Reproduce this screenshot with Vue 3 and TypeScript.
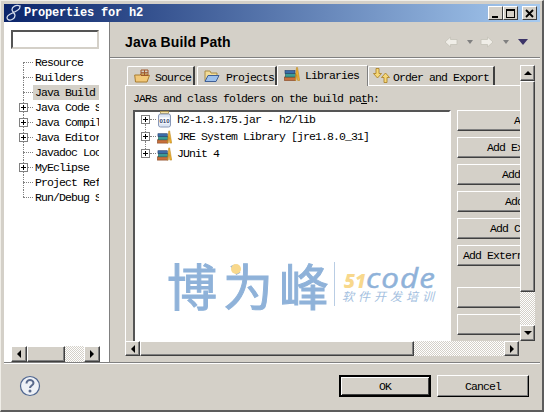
<script setup lang="ts">
interface TreeNode {
  label: string
  expandable: boolean
  selected?: boolean
}

const pages: TreeNode[] = [
  { label: 'Resource', expandable: false },
  { label: 'Builders', expandable: false },
  { label: 'Java Build', expandable: false, selected: true },
  { label: 'Java Code S', expandable: true },
  { label: 'Java Compil', expandable: true },
  { label: 'Java Editor', expandable: true },
  { label: 'Javadoc Loc', expandable: false },
  { label: 'MyEclipse', expandable: true },
  { label: 'Project Ref', expandable: false },
  { label: 'Run/Debug S', expandable: false },
]

const entries = [
  { label: 'h2-1.3.175.jar - h2/lib', kind: 'jar' },
  { label: 'JRE System Library [jre1.8.0_31]', kind: 'lib' },
  { label: 'JUnit 4', kind: 'lib' },
]

const actions = [
  'Add JARs...',
  'Add External JARs...',
  'Add Variable...',
  'Add Library...',
  'Add Class Folder...',
  'Add External Class Folder...',
]
const spare = ['Edit...', 'Remove']
</script>

<template>
  <div class="window">
    <header class="titlebar">
      <svg class="app-icon" width="16" height="18" viewBox="0 0 16 18">
        <path d="M14 2C10 .5 6 2.500 6 5.500c0 2.500 3 3.500 3 6 0 3-3.500 5-6 4.500S0 12.500 3.500 10.500 12 7 13.500 4.500C14.200 3.300 13.500 2.500 14 2Z" fill="none" stroke="#d4dcec" stroke-width="1.300" />
      </svg>
      <span class="title">Properties for h2</span>
      <div class="win-buttons">
        <button class="win-btn"><i class="min-bar"></i></button>
        <button class="win-btn"><i class="max-box"></i></button>
        <button class="win-btn close">
          <svg width="9" height="9" viewBox="0 0 9 9"><path d="M1 1l7 7M8 1L1 8" stroke="#000" stroke-width="1.800" /></svg>
        </button>
      </div>
    </header>

    <div class="main">
      <aside class="sidebar">
        <input class="filter" />
        <ul class="page-tree">
          <li v-for="page in pages" :key="page.label" class="page-row">
            <span class="twist">
              <span class="guide"></span>
              <span v-if="page.expandable" class="plus"></span>
            </span>
            <span class="page-label" :class="{ selected: page.selected }">{{ page.label }}</span>
          </li>
        </ul>
        <div class="side-hscroll">
          <button class="sb-btn"><i class="arrow left"></i></button>
          <div class="sb-thumb side-thumb"></div>
          <div class="sb-track"></div>
          <button class="sb-btn"><i class="arrow right"></i></button>
        </div>
      </aside>

      <section class="page">
        <div class="page-head">
          <h1>Java Build Path</h1>
          <div class="nav-tools">
            <svg width="14" height="12" viewBox="0 0 14 12"><path d="M6.500 1 1 6l5.500 5V8.500H13v-5H6.500Z" fill="#f0eee8" stroke="#c4c1b8" stroke-width="0.800" /></svg>
            <i class="mini-drop"></i>
            <svg class="fwd" width="14" height="12" viewBox="0 0 14 12"><path d="M7.500 1 13 6l-5.500 5V8.500H1v-5h6.500Z" fill="#f0eee8" stroke="#c4c1b8" stroke-width="0.800" /></svg>
            <i class="mini-drop"></i>
            <i class="menu-drop"></i>
          </div>
        </div>

        <div class="page-body">
          <div class="scroller">
            <div class="viewport">
              <div class="tabs">
                <div class="tab first">
                  <svg width="16" height="14" viewBox="0 0 16 14">
                    <path d="M1.500 13 .7 6H6l1-1h6l.5 1.500 2-.2L13 13Z" fill="#f2c878" stroke="#a87c30" />
                    <path d="M7 1h7v5.500H7ZM10.500 1v5.500M7 3.700h7" fill="none" stroke="#a0582c" />
                  </svg>
                  <span>Source</span>
                </div>
                <div class="tab second">
                  <svg width="16" height="14" viewBox="0 0 16 14">
                    <path d="M1 12V2h5l1 2h6v3" fill="#f2dc98" stroke="#a88c48" />
                    <path d="M1 12.500 4 6.500h11l-3 6Z" fill="#9cc0ec" stroke="#3f5f96" />
                  </svg>
                  <span>Projects</span>
                </div>
                <div class="tab active">
                  <svg width="16" height="14" viewBox="0 0 16 14">
                    <rect x="0.500" y="10" width="11" height="3.500" fill="#c8703c" stroke="#80401c" stroke-width="0.600" />
                    <rect x="1.500" y="6.500" width="10" height="3.500" fill="#3c9c94" stroke="#205c58" stroke-width="0.600" />
                    <rect x="1" y="3.500" width="10" height="3" fill="#3c6ca8" stroke="#203c68" stroke-width="0.600" />
                    <path d="M11 13.500 12.500.5h1l2.200 13h-2l-1-6-.700 6Z" fill="#eeb030" stroke="#b07c18" stroke-width="0.500" />
                  </svg>
                  <span>Libraries</span>
                </div>
                <div class="tab last">
                  <svg width="17" height="15" viewBox="0 0 17 15">
                    <path d="M3 .5h3v5h2.500L4.500 10 .5 5.500H3Z" fill="#f6d878" stroke="#a87c20" stroke-width="0.800" />
                    <path d="M11 14.500v-5H8.500L12.500 5l4 4.500H14v5Z" fill="#f6d878" stroke="#a87c20" stroke-width="0.800" />
                  </svg>
                  <span>Order and Export</span>
                </div>
              </div>

              <div class="folder">
                <p class="caption">JARs and class folders on the build pa<u>t</u>h:</p>
                <div class="lib-row">
                  <div class="lib-tree">
                    <div v-for="(entry, i) in entries" :key="entry.label" class="lib-entry">
                      <span class="lib-twist" :class="{ 'has-next': i < entries.length - 1 }"><span class="plus"></span></span>
                      <svg v-if="entry.kind === 'jar'" class="lib-icon" width="15" height="17" viewBox="0 0 15 17">
                        <rect x="3.500" y="0.500" width="8" height="2" fill="#f8e4a8" stroke="#a89048" stroke-width="0.800" />
                        <rect x="1.500" y="3" width="12" height="13" rx="2" fill="#dde6f4" stroke="#8898b8" />
                        <rect x="2.500" y="6.500" width="10" height="6" fill="#fff" />
                        <text class="jar-bits" x="7.500" y="11.500" text-anchor="middle">010</text>
                      </svg>
                      <svg v-else class="lib-icon" width="15" height="14" viewBox="0 0 16 14">
                        <rect x="0.500" y="10" width="11" height="3.500" fill="#c8703c" stroke="#80401c" stroke-width="0.600" />
                        <rect x="1.500" y="6.500" width="10" height="3.500" fill="#3c9c94" stroke="#205c58" stroke-width="0.600" />
                        <rect x="1" y="3.500" width="10" height="3" fill="#3c6ca8" stroke="#203c68" stroke-width="0.600" />
                        <path d="M11 13.500 12.500.5h1l2.200 13h-2l-1-6-.700 6Z" fill="#eeb030" stroke="#b07c18" stroke-width="0.500" />
                      </svg>
                      <span class="lib-label">{{ entry.label }}</span>
                    </div>
                  </div>
                  <div class="actions">
                    <button v-for="a in actions" :key="a" class="push">{{ a }}</button>
                    <div class="action-gap"></div>
                    <button v-for="a in spare" :key="a" class="push">{{ a }}</button>
                  </div>
                </div>
              </div>
            </div>

            <div class="vscroll">
              <button class="sb-btn"><i class="arrow up"></i></button>
              <div class="sb-thumb v-thumb"></div>
              <div class="sb-track"></div>
              <button class="sb-btn"><i class="arrow down"></i></button>
            </div>

            <div class="hscroll">
              <button class="sb-btn"><i class="arrow left"></i></button>
              <div class="sb-thumb h-thumb"></div>
              <div class="sb-track"></div>
              <button class="sb-btn"><i class="arrow right"></i></button>
            </div>
          </div>
        </div>
      </section>
    </div>

    <footer class="footer">
      <svg class="help" width="22" height="22" viewBox="0 0 22 22">
        <circle cx="11" cy="11" r="9.500" fill="#eef1f6" stroke="#4f6690" stroke-width="1.200" />
        <path d="M7.500 8.500C7.500 6 9.500 5 11 5s3.500 1 3.500 3c0 2.500-3.500 2.500-3.500 5" fill="none" stroke="#5a6a8c" stroke-width="2" />
        <circle cx="11" cy="16" r="1.500" fill="#5a6a8c" />
      </svg>
      <div class="footer-btns">
        <button class="push default">OK</button>
        <button class="push cancel">Cancel</button>
      </div>
    </footer>

    <!-- watermark stamped over the screenshot -->
    <div class="watermark">
      <i class="wm-dot"></i>
      <span class="wm-name">博为峰</span>
      <i class="wm-rule"></i>
      <div class="wm-brand">
        <div class="wm-logo"><span class="wm-51">51</span><span class="wm-code">code</span></div>
        <div class="wm-sub">软件开发培训</div>
      </div>
    </div>
  </div>
</template>

<style scoped>
.window {
  position: relative;
  width: 544px;
  height: 412px;
  box-sizing: border-box;
  padding: 3px 2px 1px 3px;
  display: flex;
  flex-direction: column;
  background: #d4d0c8;
  border-top: 1px solid #f0eee8;
  border-left: 1px solid #f0eee8;
  border-right: 2px solid #5c5c5c;
  border-bottom: 2px solid #5c5c5c;
  overflow: hidden;
  font-family: "Liberation Mono", monospace;
  font-size: 11.500px;
  letter-spacing: -0.900px;
  color: #000;
}

.titlebar {
  height: 18px;
  flex: none;
  display: flex;
  align-items: center;
  background: linear-gradient(to right, #0a246a, #a6caf0);
}
.app-icon { margin-left: 2px; flex: none; }
.title {
  margin-left: 2px;
  color: #fff;
  font-weight: bold;
  font-size: 12px;
  letter-spacing: -0.200px;
}
.win-buttons { margin-left: auto; margin-right: 3px; display: flex; }
.win-btn {
  width: 15px;
  height: 14px;
  padding: 0;
  display: flex;
  align-items: center;
  justify-content: center;
  background: #d4d0c8;
  border: 1px solid;
  border-color: #fff #404040 #404040 #fff;
}
.win-btn.close { margin-left: 4px; }
.min-bar { width: 6px; height: 2px; background: #000; margin-top: 7px; margin-right: 2px; }
.max-box { width: 9px; height: 9px; box-sizing: border-box; border: 1px solid #000; border-top-width: 2px; }

.main { flex: none; height: 340px; display: flex; }

.sidebar {
  width: 106px;
  flex: none;
  box-sizing: border-box;
  background: #fff;
  border-right: 1px solid #808080;
  padding: 8px 10px 0 7px;
  display: flex;
  flex-direction: column;
}
.filter {
  width: 88px;
  height: 19px;
  box-sizing: border-box;
  flex: none;
  padding: 0;
  background: #fff;
  border: 2px solid;
  border-color: #555 #d4d0c8 #d4d0c8 #555;
  outline: none;
}
.page-tree { list-style: none; margin: 6px 0 0; padding: 0; flex: 1; }
.page-row { height: 15px; display: flex; align-items: center; }
.twist { position: relative; width: 22px; height: 15px; flex: none; }
.twist::before {
  content: "";
  position: absolute;
  left: 12px;
  top: 0;
  height: 15px;
  border-left: 1px dotted #808080;
}
.page-row:first-child .twist::before { top: 7px; height: 8px; }
.page-row:last-child .twist::before { height: 7px; }
.guide {
  position: absolute;
  left: 12px;
  top: 7px;
  width: 10px;
  border-top: 1px dotted #808080;
}
.plus {
  position: absolute;
  left: 8px;
  top: 3px;
  width: 9px;
  height: 9px;
  box-sizing: border-box;
  background:
    linear-gradient(#000, #000) center / 5px 1px no-repeat,
    linear-gradient(#000, #000) center / 1px 5px no-repeat,
    #fff;
  border: 1px solid #808080;
}
.page-label {
  display: block;
  padding: 0 0 0 2px;
  width: 67px;
  height: 15px;
  box-sizing: border-box;
  white-space: nowrap;
  overflow: hidden;
  line-height: 15px;
}
.page-label.selected { background: #d4d0c8; }

.side-hscroll { display: flex; height: 16px; width: 89px; flex: none; }
.side-hscroll .sb-btn { height: 16px; }
.side-thumb { width: 38px; }
.side-hscroll .sb-track { flex: 1; }

.sb-btn, .sb-thumb {
  box-sizing: border-box;
  flex: none;
  background: #d4d0c8;
  border: 1px solid;
  border-color: #fff #404040 #404040 #fff;
  box-shadow: inset -1px -1px 0 #808080;
}
.sb-btn {
  width: 16px;
  height: 15px;
  padding: 0;
  display: flex;
  align-items: center;
  justify-content: center;
}
.sb-track {
  background-color: #fff;
  background-image: conic-gradient(#d4d0c8 25%, #fff 0 50%, #d4d0c8 0 75%, #fff 0);
  background-size: 2px 2px;
}
.arrow { width: 0; height: 0; border: solid transparent; display: block; }
.arrow.left { border-width: 4px 4px 4px 0; border-right-color: #000; }
.arrow.right { border-width: 4px 0 4px 4px; border-left-color: #000; }
.arrow.up { border-width: 0 4px 4px; border-bottom-color: #000; }
.arrow.down { border-width: 4px 4px 0; border-top-color: #000; }

.page {
  flex: 1;
  min-width: 0;
  display: flex;
  flex-direction: column;
}
.page-head {
  height: 35px;
  flex: none;
  box-sizing: border-box;
  padding: 4px 12px 0 15px;
  display: flex;
  align-items: center;
  justify-content: space-between;
}
.page-head h1 {
  margin: 0;
  font-family: "Liberation Sans", Arial, sans-serif;
  font-size: 14px;
  font-weight: bold;
  letter-spacing: 0.100px;
}
.nav-tools { display: flex; align-items: center; }
.fwd { margin-left: 7px; }
.mini-drop {
  margin-left: 9px;
  width: 0;
  height: 0;
  border: solid transparent;
  border-width: 4px 3.500px 0;
  border-top-color: #808080;
}
.menu-drop {
  margin-left: 9px;
  width: 0;
  height: 0;
  border: solid transparent;
  border-width: 6px 5px 0;
  border-top-color: #3c3468;
}

.page-body {
  flex: 1;
  min-height: 0;
  border-top: 1px solid #808080;
  box-shadow: inset 0 1px 0 #fff;
  padding: 7px 0 0 15px;
}
.scroller {
  display: grid;
  grid-template-columns: 395px 15px;
  grid-template-rows: 276px 15px;
}
.viewport { overflow: hidden; position: relative; }

.tabs { height: 20px; display: flex; align-items: flex-end; padding-left: 2px; }
.tab {
  height: 19px;
  box-sizing: border-box;
  display: flex;
  align-items: center;
  gap: 5px;
  padding: 2px 4px 0 6px;
  background: #d4d0c8;
  border: 1px solid #fff;
  border-bottom: none;
  border-right: 2px solid #404040;
  border-top-left-radius: 2px;
  white-space: nowrap;
}
.tab svg { flex: none; margin-top: -3px; }
.tab.first { width: 68px; margin-right: 2px; }
.tab.second { width: 80px; gap: 6px; }
.tab.active {
  width: 91px;
  height: 21px;
  margin-bottom: -1px;
  position: relative;
  z-index: 1;
  padding-top: 0;
  padding-bottom: 2px;
  border-right: 1px solid #808080;
}
.tab.last { width: 127px; gap: 3px; padding-left: 4px; }

.folder {
  box-sizing: border-box;
  height: 256px;
  border-top: 1px solid #fff;
  border-left: 1px solid #fff;
  padding: 0 0 0 7px;
}
.caption { margin: 0; height: 24px; line-height: 26px; white-space: nowrap; }
.lib-row { display: flex; }
.lib-tree {
  width: 318px;
  height: 240px;
  flex: none;
  box-sizing: border-box;
  background: #fff;
  border: 2px solid;
  border-color: #555 #fff #fff #555;
}
.lib-entry { height: 17px; display: flex; align-items: center; }
.lib-entry:first-child { margin-top: -1px; }
.lib-twist { position: relative; width: 22px; height: 17px; flex: none; }
.lib-twist .plus { left: 6px; top: 4px; }
.lib-twist::after {
  content: "";
  position: absolute;
  left: 15px;
  top: 8px;
  width: 6px;
  border-top: 1px dotted #808080;
}
.lib-twist.has-next::before {
  content: "";
  position: absolute;
  left: 10px;
  top: 13px;
  height: 8px;
  border-left: 1px dotted #808080;
}
.lib-icon { flex: none; }
.jar-bits {
  font-family: "Liberation Sans", sans-serif;
  font-size: 6px;
  font-weight: bold;
  letter-spacing: 0;
  fill: #2c3c68;
}
.lib-label { margin-left: 5px; white-space: nowrap; }

.actions {
  margin-left: 6px;
  flex: 1;
  min-width: 0;
  display: flex;
  flex-direction: column;
  gap: 6px;
}
.action-gap { height: 9px; }

.push {
  flex: none;
  width: 180px;
  height: 21px;
  box-sizing: border-box;
  padding: 0;
  background: #d4d0c8;
  border: 1px solid;
  border-color: #fff #404040 #404040 #fff;
  box-shadow: inset -1px -1px 0 #808080;
  font: inherit;
  letter-spacing: inherit;
  color: #000;
  white-space: nowrap;
}

.vscroll { display: flex; flex-direction: column; }
.vscroll .sb-btn { width: 15px; height: 16px; }
.v-thumb { height: 211px; }
.vscroll .sb-track { flex: 1; }
.hscroll { display: flex; margin-right: 1px; }
.hscroll .sb-btn { width: 15px; }
.h-thumb { width: 274px; }
.hscroll .sb-track { flex: 1; }

.footer {
  flex: 1;
  display: flex;
  align-items: center;
  justify-content: space-between;
  border-top: 1px solid #808080;
  box-shadow: inset 0 1px 0 #fff;
  padding: 0 11px 0 15px;
}
.footer-btns { display: flex; gap: 6px; }
.footer .push { width: 92px; height: 22px; }
.footer .push.default {
  border: 2px solid #000;
  box-shadow: inset 1px 1px 0 #fff, inset -1px -1px 0 #404040;
}
.footer .push.cancel { border-color: #fff #000 #000 #fff; }

.watermark {
  position: absolute;
  left: 166px;
  top: 253px;
  display: flex;
  align-items: center;
  pointer-events: none;
  letter-spacing: 0;
}
.wm-dot {
  position: absolute;
  left: 64px;
  top: 10px;
  width: 10px;
  height: 10px;
  border-radius: 50%;
  background: #f8d88c;
}
.wm-name {
  font-family: "Noto Sans CJK SC", sans-serif;
  font-size: 50px;
  line-height: 60px;
  letter-spacing: 6px;
  color: #8fb2d9;
  -webkit-text-stroke: 1px #8fb2d9;
}
.wm-rule { width: 1px; height: 44px; margin-left: -1px; background: #b9cde4; }
.wm-brand { margin-left: 9px; }
.wm-logo {
  display: flex;
  align-items: baseline;
  height: 24px;
  font-family: "Open Sans", sans-serif;
  font-style: italic;
}
.wm-51 { font-size: 19px; font-weight: 800; color: #f8d88c; line-height: 24px; }
.wm-code {
  font-size: 28px;
  line-height: 24px;
  letter-spacing: 1px;
  color: #8fb2d9;
  -webkit-text-stroke: 0.500px #8fb2d9;
  transform: scaleX(1.120);
  transform-origin: left;
}
.wm-sub {
  font-family: "Noto Sans CJK SC", sans-serif;
  font-size: 12px;
  line-height: 14px;
  margin-left: -2px;
  letter-spacing: 4px;
  font-style: italic;
  color: #a3c0e0;
}
</style>
